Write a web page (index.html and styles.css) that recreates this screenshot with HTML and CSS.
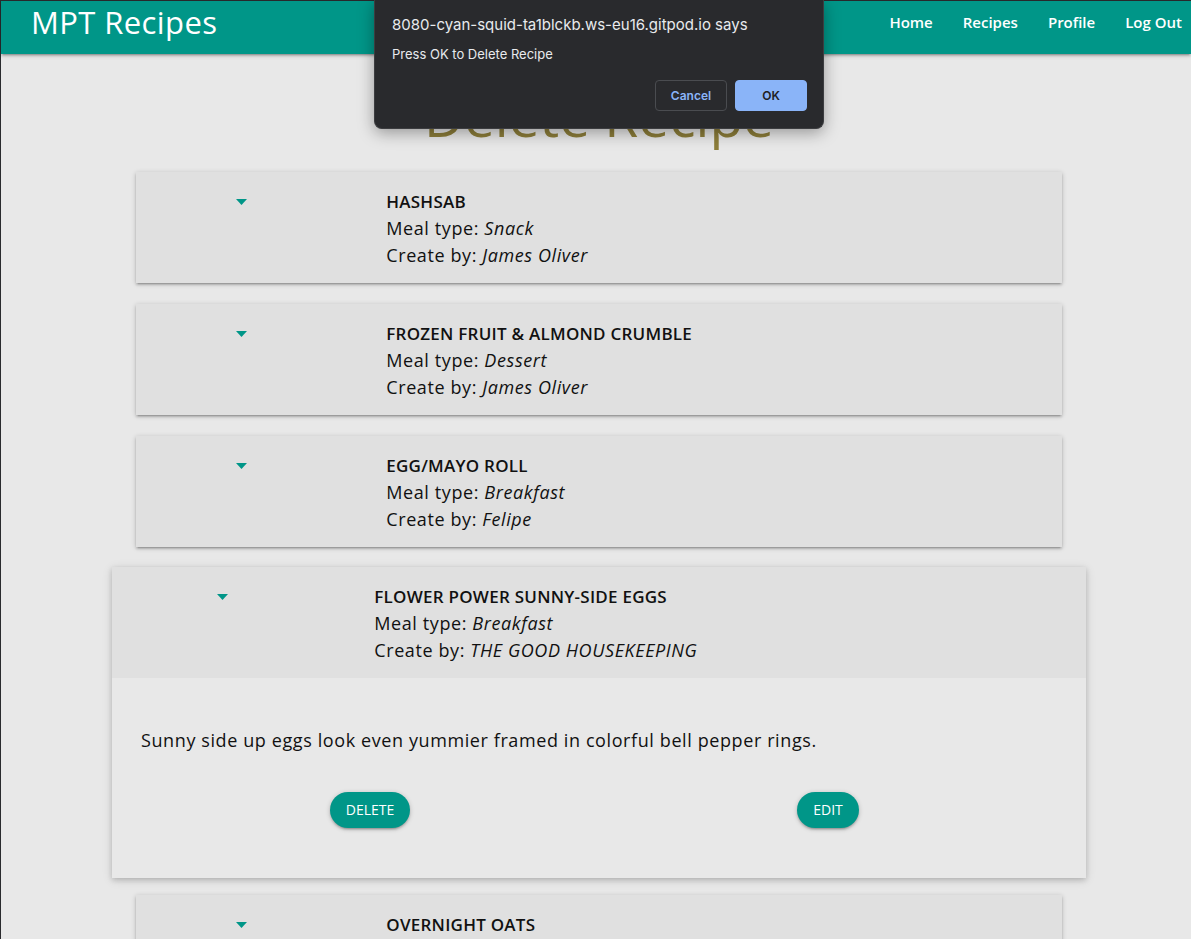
FILE: index.html
```html
<!DOCTYPE html>
<html lang="en">
<head>
<meta charset="utf-8">
<title>Delete Recipe - MPT Recipes</title>
<link rel="stylesheet" href="styles.css">
</head>
<body>
<div class="frame">
  <nav class="navbar">
    <a class="brand" href="#">MPT Recipes</a>
    <ul class="nav-links">
      <li><a href="#">Home</a></li>
      <li><a href="#">Recipes</a></li>
      <li><a href="#">Profile</a></li>
      <li><a href="#">Log Out</a></li>
    </ul>
  </nav>

  <main class="page">
    <h1 class="page-title">Delete Recipe</h1>

    <ul class="recipes">
      <li class="recipe">
        <div class="recipe-header">
          <div class="icon-col"><svg class="drop-icon" viewBox="0 0 11 6"><path d="M0 0h11L5.5 6z"/></svg></div>
          <div class="info-col">
            <div class="recipe-name">HASHSAB</div>
            <div>Meal type: <em>Snack</em></div>
            <div>Create by: <em>James Oliver</em></div>
          </div>
        </div>
      </li>
      <li class="recipe">
        <div class="recipe-header">
          <div class="icon-col"><svg class="drop-icon" viewBox="0 0 11 6"><path d="M0 0h11L5.5 6z"/></svg></div>
          <div class="info-col">
            <div class="recipe-name">FROZEN FRUIT &amp; ALMOND CRUMBLE</div>
            <div>Meal type: <em>Dessert</em></div>
            <div>Create by: <em>James Oliver</em></div>
          </div>
        </div>
      </li>
      <li class="recipe">
        <div class="recipe-header">
          <div class="icon-col"><svg class="drop-icon" viewBox="0 0 11 6"><path d="M0 0h11L5.5 6z"/></svg></div>
          <div class="info-col">
            <div class="recipe-name">EGG/MAYO ROLL</div>
            <div>Meal type: <em>Breakfast</em></div>
            <div>Create by: <em>Felipe</em></div>
          </div>
        </div>
      </li>
      <li class="recipe recipe-active">
        <div class="recipe-header">
          <div class="icon-col"><svg class="drop-icon" viewBox="0 0 11 6"><path d="M0 0h11L5.5 6z"/></svg></div>
          <div class="info-col">
            <div class="recipe-name">FLOWER POWER SUNNY-SIDE EGGS</div>
            <div>Meal type: <em>Breakfast</em></div>
            <div>Create by: <em>THE GOOD HOUSEKEEPING</em></div>
          </div>
        </div>
        <div class="recipe-body">
          <p class="recipe-desc">Sunny side up eggs look even yummier framed in colorful bell pepper rings.</p>
          <div class="recipe-actions">
            <div class="action-col"><a class="btn" href="#">Delete</a></div>
            <div class="action-col"><a class="btn" href="#">Edit</a></div>
          </div>
        </div>
      </li>
      <li class="recipe">
        <div class="recipe-header">
          <div class="icon-col"><svg class="drop-icon" viewBox="0 0 11 6"><path d="M0 0h11L5.5 6z"/></svg></div>
          <div class="info-col">
            <div class="recipe-name">OVERNIGHT OATS</div>
            <div>Meal type: <em>Breakfast</em></div>
            <div>Create by: <em>James Oliver</em></div>
          </div>
        </div>
      </li>
    </ul>
  </main>

  <div class="dialog" role="dialog">
    <div class="dialog-origin">8080-cyan-squid-ta1blckb.ws-eu16.gitpod.io says</div>
    <div class="dialog-msg">Press OK to Delete Recipe</div>
    <div class="dialog-buttons">
      <button class="dlg-btn dlg-cancel">Cancel</button>
      <button class="dlg-btn dlg-ok">OK</button>
    </div>
  </div>
</div>
</body>
</html>
```
FILE: styles.css
```css
* { box-sizing: border-box; }

html, body {
  margin: 0;
  padding: 0;
  height: 100%;
  overflow: hidden;
  background: #2a2b2e;
}

.frame {
  position: relative;
  margin: 1px 0 0 1px;
  min-height: 100%;
  background: #e8e8e8;
  font-family: "Open Sans", "Noto Sans", sans-serif;
  color: #111;
}

/* NAVBAR */
.navbar {
  display: flex;
  justify-content: space-between;
  align-items: flex-start;
  height: 53px;
  background: #009688;
  box-shadow: 0 2px 2px 0 rgba(0,0,0,.14), 0 3px 1px -2px rgba(0,0,0,.12), 0 1px 5px 0 rgba(0,0,0,.2);
  position: relative;
  z-index: 1;
}

.brand {
  color: #fff;
  text-decoration: none;
  font-size: 31px;
  line-height: 31px;
  letter-spacing: 0.4px;
  margin: 6px 0 0 30px;
  font-weight: 400;
}

.nav-links {
  list-style: none;
  display: flex;
  gap: 30px;
  margin: 10px 9px 0 0;
  padding: 0;
}

.nav-links a {
  color: #fff;
  text-decoration: none;
  font-size: 15px;
  font-weight: 600;
  line-height: 20px;
}

/* PAGE */
.page {
  width: 974px;
  margin-left: 111px;
  padding-bottom: 40px;
}

.page-title {
  margin: 31px 0 25px;
  text-align: center;
  font-size: 55px;
  line-height: 62px;
  font-weight: 400;
  color: #8d7e3a;
}

.recipes {
  list-style: none;
  margin: 0;
  padding: 0;
}

.recipe {
  margin: 0 24px 21px;
  background: #e8e8e8;
  box-shadow: 0 2px 2px 0 rgba(0,0,0,.14), 0 3px 1px -2px rgba(0,0,0,.12), 0 1px 5px 0 rgba(0,0,0,.2);
}

.recipe-active {
  margin: -1px 0 17px;
  box-shadow: 0 2px 5px 0 rgba(0,0,0,.16), 0 2px 10px 0 rgba(0,0,0,.12);
}

.recipe-header {
  display: flex;
  padding: 16px 15px 14px;
  background: #e0e0e0;
  font-size: 18px;
  letter-spacing: 0.6px;
  line-height: 27px;
}

.icon-col {
  width: 25%;
  padding: 0 11.25px;
}

.drop-icon {
  display: block;
  width: 11px;
  height: 6px;
  margin: 11px 0 0 36.7%;
  fill: #009688;
}

.info-col {
  width: 75%;
  padding: 0 11.25px;
}

.recipe-name {
  font-size: 17px;
  letter-spacing: 0.25px;
  font-weight: 600;
}

.recipe-header em {
  font-style: italic;
  line-height: 1;
}

.recipe-body {
  padding: 30px 29px 31px;
}

.recipe-desc {
  margin: 19px 0 20px;
  font-size: 18px;
  letter-spacing: 0.6px;
  line-height: 27px;
}

.recipe-actions {
  display: flex;
  padding: 18px 0 19px;
}

.action-col {
  width: 50%;
  display: flex;
  justify-content: center;
}

.btn {
  display: inline-block;
  height: 36px;
  line-height: 36px;
  padding: 0 16px;
  border-radius: 18px;
  background: #009688;
  color: #fff;
  text-decoration: none;
  text-transform: uppercase;
  font-size: 14px;
  font-weight: 500;
  box-shadow: 0 2px 2px 0 rgba(0,0,0,.14), 0 3px 1px -2px rgba(0,0,0,.12), 0 1px 5px 0 rgba(0,0,0,.2);
}

/* DIALOG */
.dialog {
  position: absolute;
  top: -1px;
  left: 373px;
  width: 450px;
  height: 129px;
  background: #292a2d;
  border: 1px solid #3c3d40;
  border-top: none;
  border-radius: 0 0 8px 8px;
  box-shadow: 0 4px 16px rgba(0,0,0,.35);
  padding: 15px 16px 0 17px;
  font-family: Inter, "Liberation Sans", sans-serif;
  color: #e8eaed;
  z-index: 5;
}

.dialog-origin {
  font-size: 15px;
  line-height: 20px;
}

.dialog-msg {
  margin-top: 11px;
  font-size: 13px;
  line-height: 17px;
}

.dialog-buttons {
  display: flex;
  justify-content: flex-end;
  gap: 8px;
  margin: 17px 0 0;
  padding-right: 0;
}

.dlg-btn {
  width: 72px;
  height: 31px;
  border-radius: 4px;
  font-family: Inter, "Liberation Sans", sans-serif;
  font-size: 12px;
  font-weight: 600;
  cursor: pointer;
}

.dlg-cancel {
  background: transparent;
  border: 1px solid #4a4c50;
  color: #8ab4f8;
}

.dlg-ok {
  background: #8ab4f8;
  border: 1px solid #8ab4f8;
  color: #202124;
}
```
